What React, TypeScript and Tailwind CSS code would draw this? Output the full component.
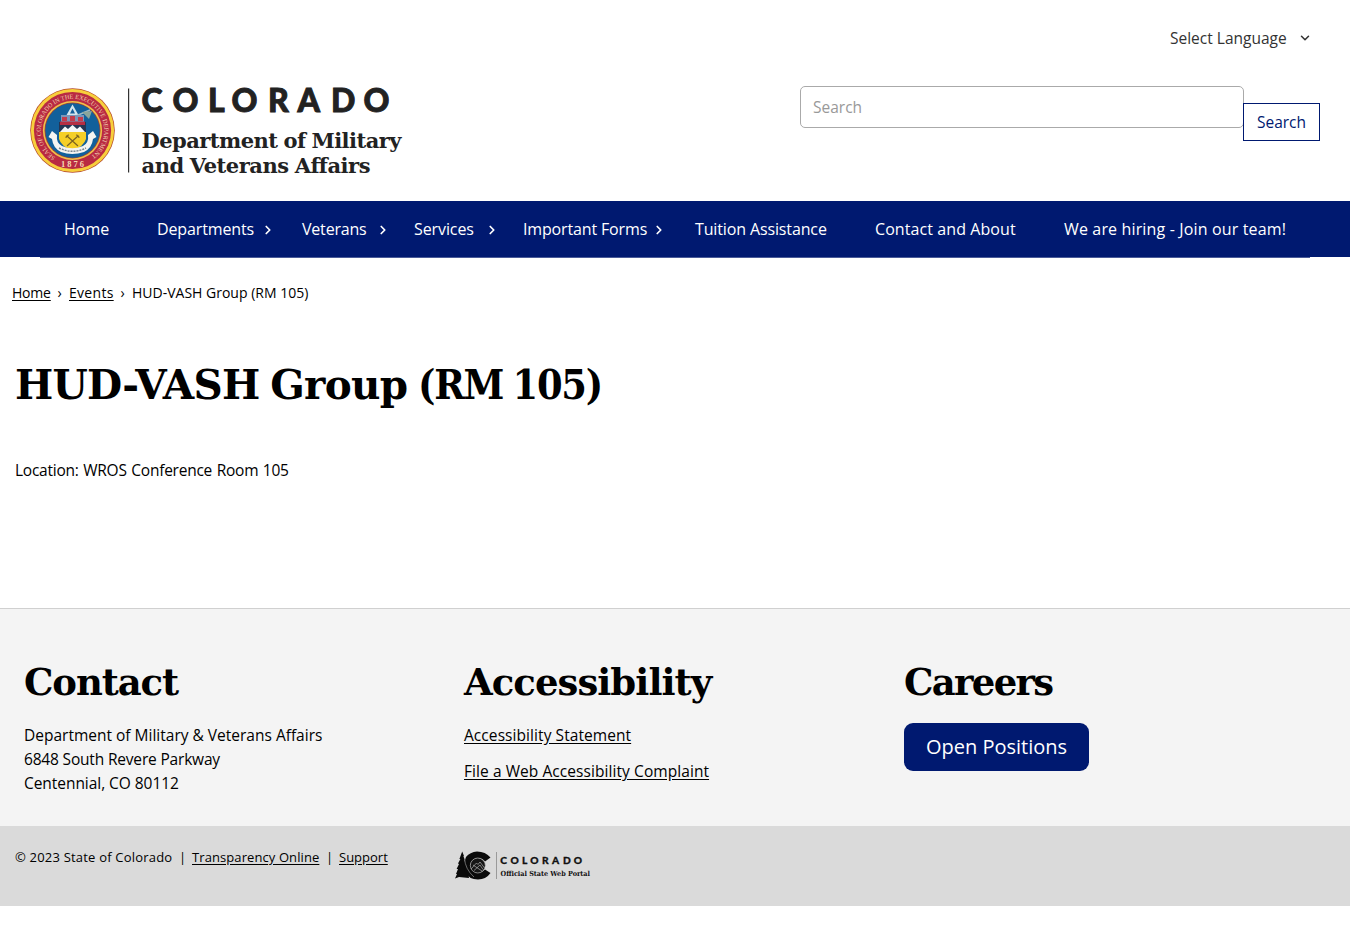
import { ChevronDown, ChevronRight } from "lucide-react";

const navItems = [
  { label: "Home", item: "w-[93px]", text: "w-[46px]", arrow: false },
  { label: "Departments", item: "w-[145px]", text: "w-[104px] tracking-[-0.13px]", arrow: true },
  { label: "Veterans", item: "w-[112px]", text: "w-[75px] tracking-[-0.2px]", arrow: true },
  { label: "Services", item: "w-[109px]", text: "w-[72px] tracking-[-0.1px]", arrow: true },
  { label: "Important Forms", item: "w-[172px]", text: "w-[129px] tracking-[-0.15px]", arrow: true },
  { label: "Tuition Assistance", item: "w-[180px]", text: "tracking-[-0.13px]", arrow: false },
  { label: "Contact and About", item: "w-[189px]", text: "tracking-[0.08px]", arrow: false },
  { label: "We are hiring - Join our team!", item: "w-[270px]", text: "tracking-[0.15px]", arrow: false },
];

function Seal() {
  return (
    <g>
      <circle cx="42.5" cy="42.5" r="42.3" fill="#b5482c" />
      <circle cx="42.5" cy="42.5" r="41.6" fill="#f7cf3c" />
      <circle cx="42.5" cy="42.5" r="38.6" fill="#b92a42" />
      <circle cx="42.5" cy="42.5" r="29.6" fill="#efc04a" />
      <circle cx="42.5" cy="42.5" r="28" fill="#a8442f" />
      <circle cx="42.5" cy="42.5" r="27.2" fill="#12609b" />
      <path id="seal-top" d="M25.5 69.2 A31.7 31.7 0 1 1 59.5 69.2" fill="none" />
      <text fontFamily="Liberation Serif, serif" fontSize="6.4" fill="#f2cfae">
        <textPath href="#seal-top" textLength="161" lengthAdjust="spacingAndGlyphs">
          SEAL OF COLORADO IN THE EXECUTIVE DEPARTMENT
        </textPath>
      </text>
      <text x="42.5" y="79.2" textAnchor="middle" textLength="23" fontFamily="Liberation Serif, serif" fontSize="8.5" fontWeight="bold" fill="#f6d9b4">
        1876
      </text>
      <path d="M42.5 16.5 L49 28 H36 Z" fill="#d5e6ee" />
      <path d="M42.5 20.5 L45 25.5 H40 Z" fill="#17609c" />
      <path d="M32 28 L54 29 M34 33 L60 22" stroke="#9dbbc6" strokeWidth="1.6" />
      <path d="M52 24 L62 23 L59 31 Z" fill="#8aa59b" />
      <path d="M31 27 H54 V35 H31 Z" fill="#7b96ba" />
      <path d="M32 29 H37 V33 H32 Z M40 28 H45 V33 H40 Z M48 29 H53 V33 H48 Z" fill="#c33c4d" />
      <path d="M29 34 H56 V44 H29 Z" fill="#263553" />
      <path d="M30 33.5 H55 V37 H30 Z" fill="#b62d42" />
      <path d="M30 44 L35 38.5 L38 41 L42.5 37 L47 41 L50 38.5 L55 44 Z" fill="#f4f6f7" />
      <path d="M29 44 H56 V51 Q54 58 42.5 63 Q31 58 29 51 Z" fill="#f5cf27" />
      <path d="M37 48 L48 58 M48 48 L37 58" stroke="#7b6321" strokeWidth="1.2" />
      <path d="M36 50 Q36 47 39 47 M49 50 Q49 47 46 47" fill="none" stroke="#7b6321" strokeWidth="1.1" />
      <path d="M18.5 49 L22 43 L27 47 Q26 55 32 58 Q42 62.5 53 58 Q59 55 58 47 L63 43 L66.5 49 L63 51 Q62 60 54 64 Q42 68 31 64 Q23 60 22 51 Z" fill="#f4f4f2" />
      <path d="M29 60 Q42.5 66.5 56 60" fill="none" stroke="#74818b" strokeWidth="1.4" strokeDasharray="2 1" />
    </g>
  );
}

function HeaderLogo() {
  return (
    <svg width="376" height="104" viewBox="0 -12 376 104" role="img" className="block">
      <Seal />
      <rect x="98" y="0.5" width="1.2" height="84" fill="#333" />
      <text
        x="111.5 142.5 178 201.5 238 267.5 301 333.5"
        y="24"
        fontFamily="Lato, sans-serif"
        fontSize="32"
        fontWeight="900"
        fill="#222"
        stroke="#222"
        strokeWidth="0.9"
      >
        COLORADO
      </text>
      <g fontFamily="'DejaVu Serif', serif" fontWeight="bold" fontSize="21" wordSpacing="-0.8" fill="#222">
        <text x="111.5" y="60" textLength="260">Department of Military</text>
        <text x="111.5" y="85" textLength="229">and Veterans Affairs</text>
      </g>
    </svg>
  );
}

function PortalLogo() {
  return (
    <svg width="144" height="34" viewBox="0 0 144 34" role="img" className="block">
      <path d="M7.2 0.5 L9 5 L8.4 5.2 L10 9 L9.4 9.4 L13 20 L14 27 L4 26 L0 27.5 L2 23 L1 23 L3 18 L1.6 18 L4 13 L3 12.6 L5.4 8 L4.4 8 Z" fill="#0a0a0a" />
      <path d="M35.5 6.5 Q30.5 0.5 22 0.5 Q15 1 11 6 Q7.5 14 10 21 Q14 28.5 23 28.5 Q31 28.5 35.5 22 L30 18.5 Q26 23 20 21 Q15 18 15.5 13 Q17.5 7 23 7 Q27.5 7 30 10.5 Z" fill="#0a0a0a" />
      <circle cx="22.8" cy="14.5" r="7.5" fill="#161616" stroke="#c8c8c8" strokeWidth="0.6" />
      <path d="M16 18 L21.5 12 L23 13.5 L25 11 L29.5 17 M19 19.5 L25 14 L28 18.5 M18 14 L27 20" fill="none" stroke="#c8c8c8" strokeWidth="0.6" />
      <path d="M9.5 7 Q10 18 19 26" fill="none" stroke="#aaa" strokeWidth="0.6" />
      <rect x="41" y="1" width="0.8" height="27" fill="#8a8a8a" />
      <text
        x="45.2 55.5 67 75.2 87 97 108 118.8"
        y="12.6"
        fontFamily="Lato, sans-serif"
        fontSize="10.2"
        fontWeight="900"
        fill="#111"
        stroke="#111"
        strokeWidth="0.3"
      >
        COLORADO
      </text>
      <text x="45.5" y="24.5" textLength="89.5" lengthAdjust="spacingAndGlyphs" fontFamily="'DejaVu Serif', serif" fontWeight="bold" fontSize="7" fill="#111">
        Official State Web Portal
      </text>
    </svg>
  );
}

export default function App() {
  return (
    <div className="min-h-[940px] w-full bg-white font-['Open_Sans',sans-serif] text-[15.5px] leading-6 text-black">
      <header className="flex h-[201px] flex-col">
        <div className="flex h-[76px] justify-end pt-[26px] pr-[38px]">
          <button className="flex h-6 items-center text-[#333]">
            <span className="w-[127px] text-left whitespace-nowrap">Select Language</span>
            <ChevronDown className="ml-px h-[14px] w-[14px]" strokeWidth={2.6} />
          </button>
        </div>
        <div className="flex justify-between px-[30px]">
          <a href="#">
            <HeaderLogo />
          </a>
          <form className="flex w-[520px] pt-[10px]">
            <input
              placeholder="Search"
              className="h-[42px] w-[445px] rounded-[5px] border border-[#aaa] px-3 placeholder:text-[#999] placeholder:opacity-100"
            />
            <button type="button" className="mt-[17px] -ml-px h-[38px] w-[77px] shrink-0 border border-[#001970] bg-white font-medium text-[#001970]">
              Search
            </button>
          </form>
        </div>
      </header>

      <nav className="flex h-[56px] bg-[#001970] px-10 text-base">
        {navItems.map((n) => (
          <a key={n.label} href="#" className={`flex h-[57px] shrink-0 items-center border-b border-[#4a5b98] pl-6 whitespace-nowrap text-white ${n.item}`}>
            <span className={n.text}>{n.label}</span>
            {n.arrow && <ChevronRight className="mt-0.5 h-[14px] w-[14px] shrink-0" strokeWidth={3} />}
          </a>
        ))}
      </nav>

      <main className="h-[351px]">
        <div className="flex items-center pt-[24px] pl-3 text-[14px] whitespace-nowrap">
          <a href="#" className="w-[38px] tracking-[-0.2px] underline underline-offset-[1.5px]">Home</a>
          <span className="w-[19px] text-center">›</span>
          <a href="#" className="w-[44px] tracking-[0.3px] underline underline-offset-[1.5px]">Events</a>
          <span className="w-[19px] text-center">›</span>
          <span>HUD-VASH Group (RM 105)</span>
        </div>
        <h1 className="mt-[54px] h-[52px] pl-[15px] font-['DejaVu_Serif',serif] text-[40.5px] leading-[52px] font-bold tracking-[-0.75px] whitespace-nowrap [word-spacing:-2.6px]">
          HUD-VASH Group{" "}
          <span className="font-['DejaVu_Serif_Condensed',serif] text-[41px] tracking-[-1.3px] [word-spacing:-2px]">(RM 105)</span>
        </h1>
        <p className="mt-[47px] pl-[15px] tracking-[-0.24px] [word-spacing:0.8px]">Location: WROS Conference Room 105</p>
      </main>

      <footer>
        <div className="grid h-[218px] grid-cols-[440px_440px_1fr] border-t border-[#d0d0d0] bg-[#f4f4f4] pt-[50px] pl-6">
          <section>
            <h2 className="font-['DejaVu_Serif',serif] text-[37px] leading-[46px] font-bold tracking-[-1.1px]">Contact</h2>
            <p className="mt-[18px]">Department of Military &amp; Veterans Affairs</p>
            <p className="tracking-[-0.18px]">6848 South Revere Parkway</p>
            <p className="tracking-[-0.05px]">Centennial, CO 80112</p>
          </section>
          <section>
            <h2 className="font-['DejaVu_Serif',serif] text-[37px] leading-[46px] font-bold tracking-[-0.95px]">Accessibility</h2>
            <div className="mt-[18px] flex flex-col items-start gap-3 tracking-[0.07px]">
              <a href="#" className="underline underline-offset-[1.5px]">Accessibility Statement</a>
              <a href="#" className="underline underline-offset-[1.5px]">File a Web Accessibility Complaint</a>
            </div>
          </section>
          <section>
            <h2 className="font-['DejaVu_Serif',serif] text-[37px] leading-[46px] font-bold tracking-[-1.7px]">Careers</h2>
            <a href="#" className="mt-[18px] flex h-12 w-[185px] items-center justify-center rounded-[9px] bg-[#001970] text-xl text-white">
              Open Positions
            </a>
          </section>
        </div>
        <div className="flex h-20 bg-[#dadada] pl-[15px] text-[13px]">
          <div className="flex w-[440px] pt-[19px] whitespace-nowrap">
            <span className="w-[158px] tracking-[0.2px]">© 2023 State of Colorado</span>
            <span className="w-[19px] text-center">|</span>
            <a href="#" className="w-[128px] tracking-[0.09px]"><span className="underline underline-offset-[1.5px]">Transparency Online</span></a>
            <span className="w-[19px] text-center">|</span>
            <a href="#"><span className="underline underline-offset-[1.5px]">Support</span></a>
          </div>
          <div className="pt-[25px]">
            <PortalLogo />
          </div>
        </div>
      </footer>
    </div>
  );
}
